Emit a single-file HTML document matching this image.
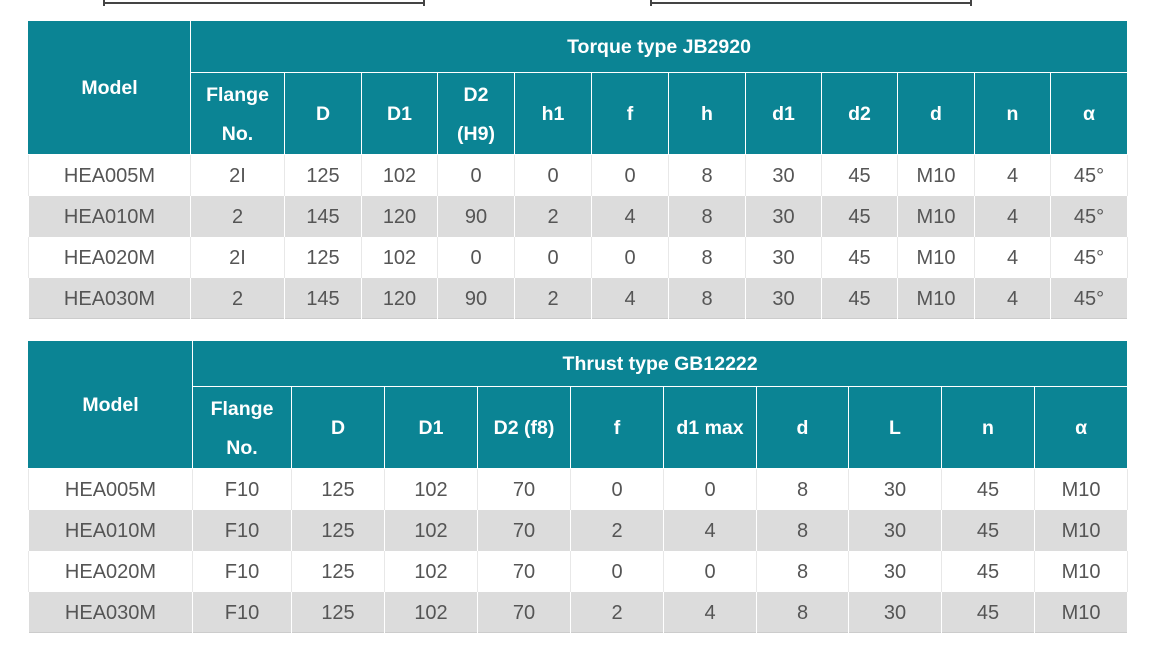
<!DOCTYPE html>
<html><head><meta charset="utf-8"><style>
body{margin:0;width:1154px;height:656px;background:#fff;position:relative;overflow:hidden;font-family:"Liberation Sans",Arial,sans-serif}
table{position:absolute;left:28px;border-collapse:collapse;table-layout:fixed;width:1099px}
td,th{padding:0;text-align:center}
th{background:#0b8494;color:#fff;font-weight:bold;border:1px solid #fff;line-height:39px;font-size:19.5px;padding-top:2px}
td{color:#555;border-left:1px solid #fff;border-right:1px solid #fff;height:41px;font-size:20px;padding-top:3px;box-sizing:border-box}
tr.g td{background:#dcdcdc}
tr.w td{background:#fff;border-color:#e8e8e8}
table{border:1px solid #ccc}
th.m{border-left:1px solid #0b8494}
.ln{position:absolute;top:2px;height:2px;background:#444}
.tk{position:absolute;top:0;width:2px;height:6px;background:#444}
</style></head><body>
<div class="ln" style="left:103px;width:322px"></div><div class="tk" style="left:103px"></div><div class="tk" style="left:423px"></div>
<div class="ln" style="left:650px;width:322px"></div><div class="tk" style="left:650px"></div><div class="tk" style="left:970px"></div>
<table style="top:20px">
<colgroup><col style="width:162px"><col style="width:94px"><col style="width:77px"><col style="width:76px"><col style="width:77px"><col style="width:77px"><col style="width:77px"><col style="width:77px"><col style="width:76px"><col style="width:76px"><col style="width:77px"><col style="width:76px"><col style="width:77px"></colgroup>
<tr style="height:52px"><th class="m" rowspan="2">Model</th><th colspan="12">Torque type JB2920</th></tr>
<tr style="height:82px"><th>Flange<br>No.</th><th>D</th><th>D1</th><th>D2<br>(H9)</th><th>h1</th><th>f</th><th>h</th><th>d1</th><th>d2</th><th>d</th><th>n</th><th>α</th></tr>
<tr class="w"><td>HEA005M</td><td>2I</td><td>125</td><td>102</td><td>0</td><td>0</td><td>0</td><td>8</td><td>30</td><td>45</td><td>M10</td><td>4</td><td>45°</td></tr>
<tr class="g"><td>HEA010M</td><td>2</td><td>145</td><td>120</td><td>90</td><td>2</td><td>4</td><td>8</td><td>30</td><td>45</td><td>M10</td><td>4</td><td>45°</td></tr>
<tr class="w"><td>HEA020M</td><td>2I</td><td>125</td><td>102</td><td>0</td><td>0</td><td>0</td><td>8</td><td>30</td><td>45</td><td>M10</td><td>4</td><td>45°</td></tr>
<tr class="g"><td>HEA030M</td><td>2</td><td>145</td><td>120</td><td>90</td><td>2</td><td>4</td><td>8</td><td>30</td><td>45</td><td>M10</td><td>4</td><td>45°</td></tr>
</table>
<table style="top:340px">
<colgroup><col style="width:164px"><col style="width:99px"><col style="width:93px"><col style="width:93px"><col style="width:93px"><col style="width:93px"><col style="width:93px"><col style="width:92px"><col style="width:93px"><col style="width:93px"><col style="width:93px"></colgroup>
<tr style="height:46px"><th class="m" rowspan="2">Model</th><th colspan="10">Thrust type GB12222</th></tr>
<tr style="height:82px"><th>Flange<br>No.</th><th>D</th><th>D1</th><th>D2 (f8)</th><th>f</th><th>d1 max</th><th>d</th><th>L</th><th>n</th><th>α</th></tr>
<tr class="w"><td>HEA005M</td><td>F10</td><td>125</td><td>102</td><td>70</td><td>0</td><td>0</td><td>8</td><td>30</td><td>45</td><td>M10</td></tr>
<tr class="g"><td>HEA010M</td><td>F10</td><td>125</td><td>102</td><td>70</td><td>2</td><td>4</td><td>8</td><td>30</td><td>45</td><td>M10</td></tr>
<tr class="w"><td>HEA020M</td><td>F10</td><td>125</td><td>102</td><td>70</td><td>0</td><td>0</td><td>8</td><td>30</td><td>45</td><td>M10</td></tr>
<tr class="g"><td>HEA030M</td><td>F10</td><td>125</td><td>102</td><td>70</td><td>2</td><td>4</td><td>8</td><td>30</td><td>45</td><td>M10</td></tr>
</table>
</body></html>
